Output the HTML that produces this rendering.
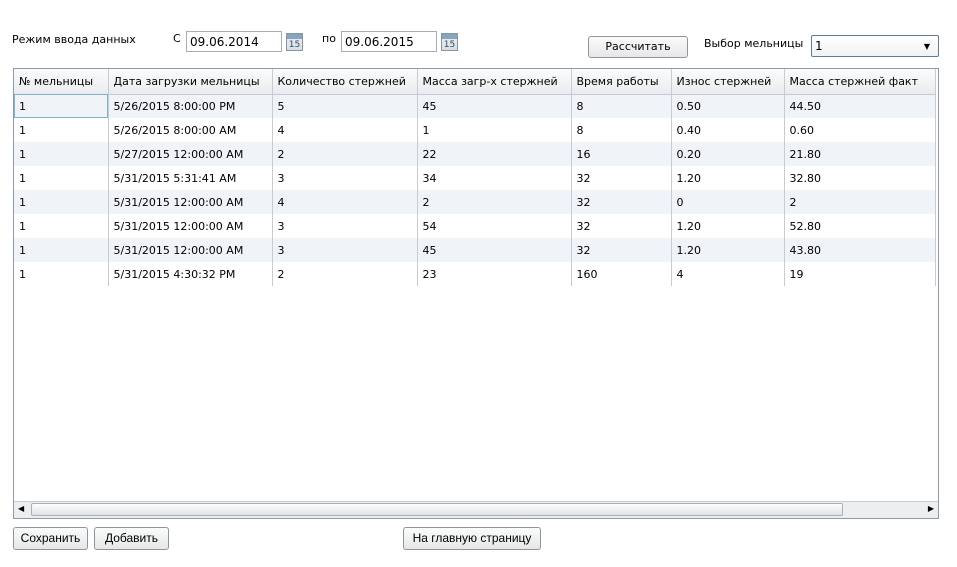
<!DOCTYPE html>
<html><head><meta charset="utf-8"><style>
body{margin:0;width:957px;height:567px;background:#fff;font-family:"DejaVu Sans",Verdana,sans-serif;font-size:11px;color:#000;position:relative;overflow:hidden}
.a{position:absolute;white-space:nowrap}
.inp{position:absolute;border:1px solid #a9adb3;background:#fff;height:21px;line-height:21px;padding-left:3px;box-sizing:border-box;font-size:12px}
.cal{position:absolute;width:17px;height:18px;border:1px solid #8a949e;box-sizing:border-box;background:linear-gradient(#eef2f6,#d6dde5);font-size:9px;text-align:center;line-height:22px;color:#3a4a5a}
.cal:before{content:"";position:absolute;left:0;right:0;top:0;height:5px;background:#8aa4c0}
.btn{position:absolute;border:1px solid #8f959b;border-radius:3px;background:linear-gradient(#fbfbfb,#e6e7e9);box-sizing:border-box;text-align:center}
.grid{position:absolute;left:13px;top:68px;width:926px;height:451px;border:1px solid #8f9aa6;box-sizing:border-box}
table{border-collapse:collapse;position:absolute;left:0;top:0;table-layout:fixed}
th{height:25px;background:linear-gradient(#fbfbfc,#e9ecef);font-weight:normal;text-align:left;padding:0 0 0 5px;border-right:1px solid #c6ccd2;border-bottom:1px solid #c6ccd2;box-sizing:border-box}
td{height:24px;padding:0 0 0 5px;border-right:1px solid #c6ccd2;box-sizing:border-box}
tr.o td{background:#f0f3f8}
.sel{outline:1px solid #7fb2c9;outline-offset:-1px}
</style></head><body>
<div class="a" style="left:12px;top:33px">Режим ввода данных</div>
<div class="a" style="left:173px;top:32px">С</div>
<div class="inp" style="left:186px;top:31px;width:96px">09.06.2014</div>
<div class="cal" style="left:286px;top:33px">15</div>
<div class="a" style="left:322px;top:32px">по</div>
<div class="inp" style="left:341px;top:31px;width:96px">09.06.2015</div>
<div class="cal" style="left:441px;top:33px">15</div>
<div class="btn" style="left:588px;top:36px;width:100px;height:22px;line-height:20px">Рассчитать</div>
<div class="a" style="left:704px;top:37px">Выбор мельницы</div>
<div class="inp" style="left:811px;top:35px;width:128px;height:22px;border-color:#5e7d96;border-radius:2px;background:linear-gradient(#fff,#f0f2f4)">1<span style="position:absolute;right:8px;top:0;font-size:8px">▼</span></div>
<div class="grid">
<table>
<colgroup><col style="width:94px"><col style="width:164px"><col style="width:145px"><col style="width:154px"><col style="width:100px"><col style="width:113px"><col style="width:151px"></colgroup>
<tr><th>№ мельницы</th><th>Дата загрузки мельницы</th><th>Количество стержней</th><th>Масса загр-х стержней</th><th>Время работы</th><th>Износ стержней</th><th>Масса стержней факт</th></tr>
<tr class="o"><td class="sel">1</td><td>5/26/2015 8:00:00 PM</td><td>5</td><td>45</td><td>8</td><td>0.50</td><td>44.50</td></tr>
<tr><td>1</td><td>5/26/2015 8:00:00 AM</td><td>4</td><td>1</td><td>8</td><td>0.40</td><td>0.60</td></tr>
<tr class="o"><td>1</td><td>5/27/2015 12:00:00 AM</td><td>2</td><td>22</td><td>16</td><td>0.20</td><td>21.80</td></tr>
<tr><td>1</td><td>5/31/2015 5:31:41 AM</td><td>3</td><td>34</td><td>32</td><td>1.20</td><td>32.80</td></tr>
<tr class="o"><td>1</td><td>5/31/2015 12:00:00 AM</td><td>4</td><td>2</td><td>32</td><td>0</td><td>2</td></tr>
<tr><td>1</td><td>5/31/2015 12:00:00 AM</td><td>3</td><td>54</td><td>32</td><td>1.20</td><td>52.80</td></tr>
<tr class="o"><td>1</td><td>5/31/2015 12:00:00 AM</td><td>3</td><td>45</td><td>32</td><td>1.20</td><td>43.80</td></tr>
<tr><td>1</td><td>5/31/2015 4:30:32 PM</td><td>2</td><td>23</td><td>160</td><td>4</td><td>19</td></tr>
</table>
<div style="position:absolute;left:0;right:0;bottom:0;height:16px;background:#eceef0;border-top:1px solid #c6ccd2">
<span class="a" style="left:4px;top:2px;font-size:8px">◀</span>
<div style="position:absolute;left:17px;top:1px;width:812px;height:13px;border:1px solid #a9b0b7;border-radius:2px;box-sizing:border-box;background:linear-gradient(#fdfdfd,#e0e3e6)"></div>
<span class="a" style="right:4px;top:2px;font-size:8px">▶</span>
</div>
</div>
<div class="btn" style="left:13px;top:527px;width:75px;height:23px;line-height:21px;font-family:'Liberation Sans',sans-serif;font-size:12px">Сохранить</div>
<div class="btn" style="left:94px;top:527px;width:75px;height:23px;line-height:21px;font-family:'Liberation Sans',sans-serif;font-size:12px">Добавить</div>
<div class="btn" style="left:403px;top:527px;width:138px;height:23px;line-height:21px;font-family:'Liberation Sans',sans-serif;font-size:12px">На главную страницу</div>
</body></html>
